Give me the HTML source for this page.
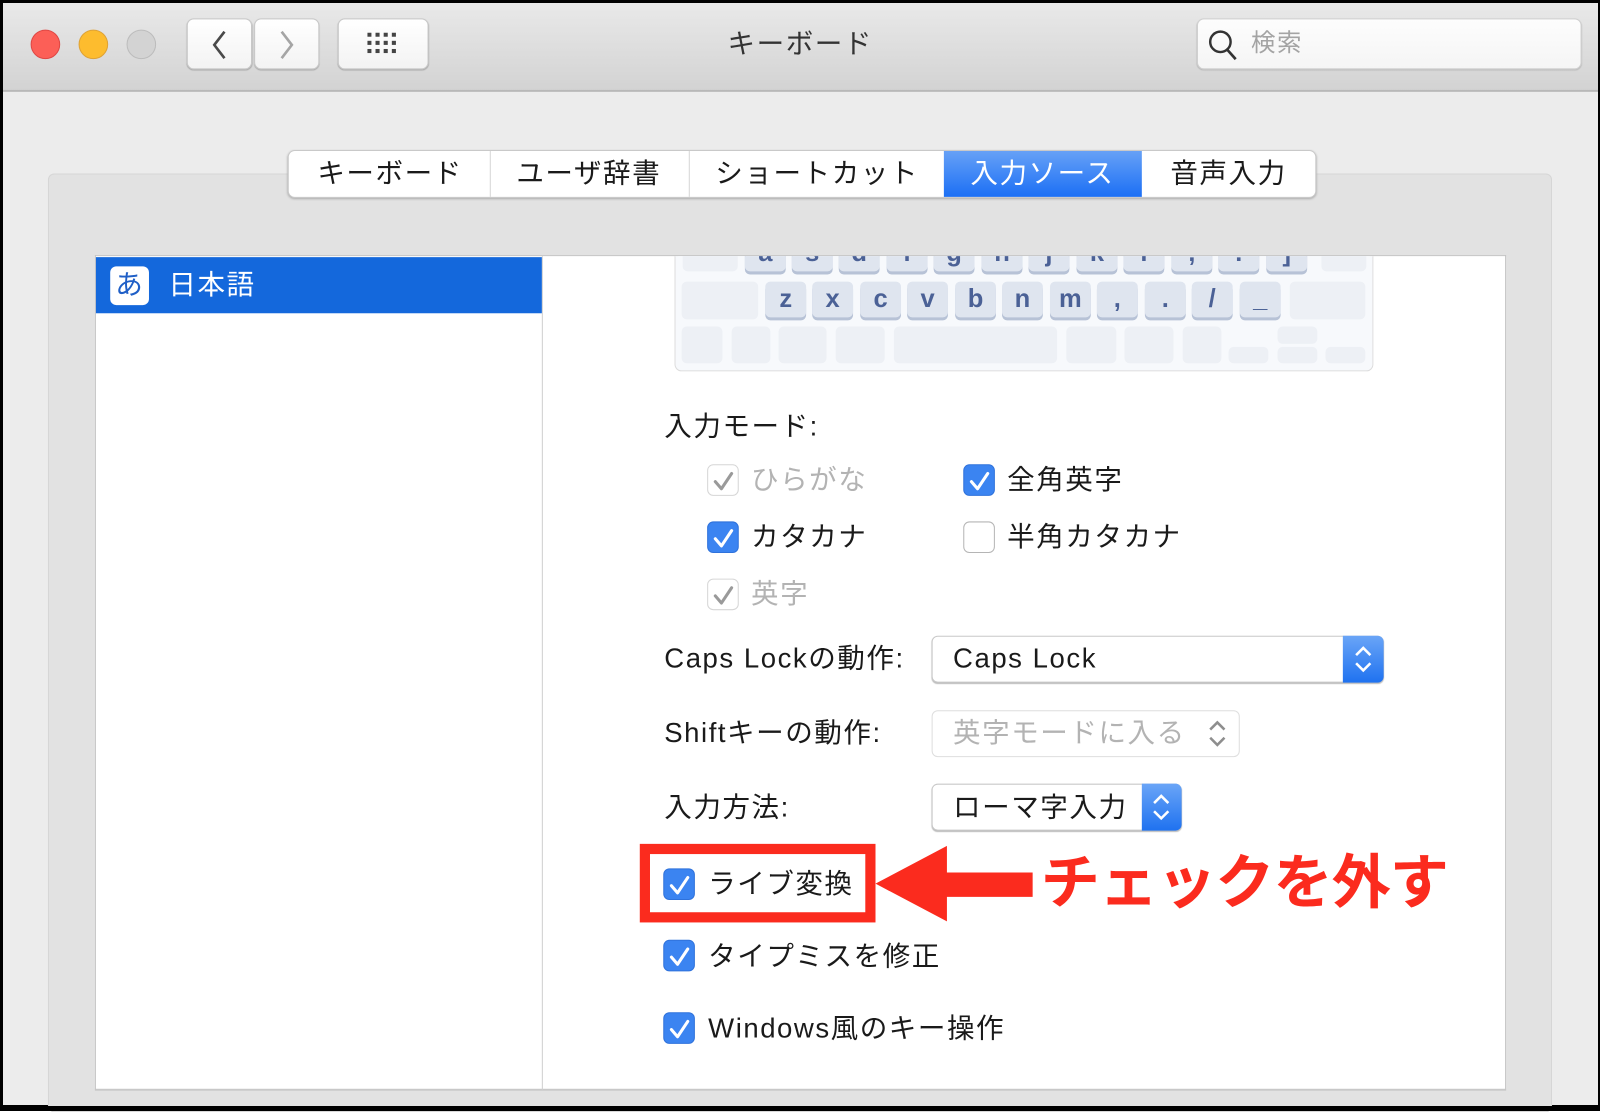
<!DOCTYPE html>
<html><head><meta charset="utf-8"><style>
*{margin:0;padding:0;box-sizing:border-box}
body{width:1600px;height:1111px;position:relative;overflow:hidden;background:#fff;font-family:"Liberation Sans","Noto Sans CJK JP",sans-serif;color:#1a1a1a}
.a{position:absolute}
.win{left:0;top:0;width:1600px;height:1109px;background:#ececec;border:3px solid #000;border-right-width:2px;border-bottom-width:4px}
#s{position:absolute;left:0;top:0;width:1568px;height:1088px;transform:scale(1.0204);transform-origin:0 0}
.tb{left:0;top:0;width:1566px;height:88px;background:linear-gradient(#e9e9e9,#d3d3d3);border-bottom:2px solid #b8b8b8}
.dot{width:29px;height:29px;border-radius:50%;top:29px}
.btn{background:linear-gradient(#fff,#f3f3f3);border:1px solid #c8c8c8;border-radius:7px;box-shadow:0 1px 1px #aaa}
.t{white-space:nowrap;font-size:27px;line-height:1;margin-top:1px;letter-spacing:1.5px}
.key{background:#dfe5ef;border-radius:5px;box-shadow:0 3px 0 #b7c2d6;color:#4b6196;font-weight:bold;font-size:25px;text-align:center;line-height:34px;width:40px;height:35px}
.bk{background:#edf0f5;border-radius:5px}
.cb{width:31px;height:31px;border-radius:6px;background:#3b84f1;border:1px solid #2f72db}
.cb svg{position:absolute;left:5px;top:6px}
.cbd{background:#fff;border:1.5px solid #d6d6d6}
.cbe{background:#fff;border:1.5px solid #b5b5b5}
.pop{background:#fff;border:1px solid #c9c9c9;border-radius:6px;box-shadow:0 1px 1px #bbb}
.step{background:linear-gradient(#6aa5f7,#1f72f0);border-radius:0 6px 6px 0}
</style></head><body>
<div class="a win"></div>
<div id="s">
<div class="a tb" style="left:2px;top:2px"></div>
<div class="a dot" style="left:30px;background:#fc5f57;border:1px solid #df4744"></div>
<div class="a dot" style="left:77px;background:#fdbc2e;border:1px solid #dea236"></div>
<div class="a dot" style="left:124px;background:#d3d3d3;border:1px solid #bcbcbc"></div>
<div class="a btn" style="left:183px;top:18px;width:64px;height:50px"></div>
<div class="a btn" style="left:249px;top:18px;width:64px;height:50px"></div>
<svg class="a" style="left:205px;top:28px" width="20" height="32"><path d="M15 3 L5 16 L15 29" stroke="#4a4a4a" stroke-width="2.6" fill="none"/></svg>
<svg class="a" style="left:271px;top:28px" width="20" height="32"><path d="M5 3 L15 16 L5 29" stroke="#a5a5a5" stroke-width="2.6" fill="none"/></svg>
<div class="a btn" style="left:331px;top:18px;width:89px;height:50px"></div>
<svg class="a" style="left:360px;top:32px" width="32" height="24" fill="#444"><g id="r"><rect x="0" y="0" width="4" height="4"/><rect x="8" y="0" width="4" height="4"/><rect x="16" y="0" width="4" height="4"/><rect x="24" y="0" width="4" height="4"/></g><use href="#r" y="8"/><use href="#r" y="16"/></svg>
<div class="a t" style="left:713px;top:29px;color:#333">キーボード</div>
<div class="a" style="left:1173px;top:18px;width:377px;height:50px;background:linear-gradient(#fdfdfd,#f5f5f5);border:1px solid #cfcfcf;border-radius:7px;box-shadow:0 1px 1px #bbb"></div>
<svg class="a" style="left:1183px;top:27px" width="32" height="34"><circle cx="13" cy="14" r="10" stroke="#333" stroke-width="2.4" fill="none"/><path d="M20 22 L28 31" stroke="#333" stroke-width="2.6"/></svg>
<div class="a t" style="left:1226px;top:30px;color:#a4a4a4;font-size:24px">検索</div>

<div class="a" style="left:47px;top:170px;width:1474px;height:920px;background:#e2e2e2;border:1px solid #d6d6d6;border-radius:6px"></div>
<div class="a" style="left:282px;top:147px;width:1008px;height:47px;background:#fff;border:1px solid #c9c9c9;border-radius:7px;box-shadow:0 1px 2px #aaa;overflow:hidden">
 <div class="a" style="left:197px;top:0;width:1px;height:47px;background:#d6d6d6"></div>
 <div class="a" style="left:392px;top:0;width:1px;height:47px;background:#d6d6d6"></div>
 <div class="a" style="left:642px;top:-1px;width:194px;height:47px;background:linear-gradient(#68a2f6,#1a6ef5)"></div>
</div>
<div class="a t" style="left:311px;top:156px">キーボード</div>
<div class="a t" style="left:506px;top:156px">ユーザ辞書</div>
<div class="a t" style="left:701px;top:156px">ショートカット</div>
<div class="a t" style="left:951px;top:156px;color:#fff">入力ソース</div>
<div class="a t" style="left:1147px;top:156px">音声入力</div>

<div class="a" style="left:93px;top:250px;width:1383px;height:819px;background:#fff;border:1px solid #c4c4c4;border-bottom:2px solid #c8c8c8"></div>
<div class="a" style="left:531px;top:251px;width:1px;height:817px;background:#cfcfcf"></div>
<div class="a" style="left:94px;top:252px;width:437px;height:55px;background:#1468dc"></div>
<div class="a" style="left:108px;top:261px;width:38px;height:38px;background:#fff;border-radius:6px"></div>
<div class="a t" style="left:113px;top:265px;color:#1f5fc7;font-size:27px;letter-spacing:0">あ</div>
<div class="a t" style="left:165px;top:265px;color:#fff;font-size:27px">日本語</div>

<div class="a" style="left:661px;top:251px;width:685px;height:113px;background:#f7f9fc;border:1px solid #dcdcdc;border-top:none;border-radius:0 0 7px 7px;overflow:hidden">
 <div class="a bk" style="left:7px;top:-10px;width:54px;height:25px"></div>
 <div class="a bk" style="left:633px;top:-10px;width:44px;height:25px"></div>
</div>
<div class="a" style="left:661px;top:251px;width:685px;height:20px;overflow:hidden">
 <div class="a key" style="left:69px;top:-20px">a</div><div class="a key" style="left:115px;top:-20px">s</div><div class="a key" style="left:161px;top:-20px">d</div><div class="a key" style="left:208px;top:-20px">f</div><div class="a key" style="left:254px;top:-20px">g</div><div class="a key" style="left:301px;top:-20px">h</div><div class="a key" style="left:347px;top:-20px">j</div><div class="a key" style="left:394px;top:-20px">k</div><div class="a key" style="left:440px;top:-20px">l</div><div class="a key" style="left:487px;top:-20px">;</div><div class="a key" style="left:533px;top:-20px">:</div><div class="a key" style="left:580px;top:-20px">]</div>
</div>
<div class="a bk" style="left:668px;top:276px;width:75px;height:37px"></div>
<div class="a key" style="left:750px;top:276px">z</div><div class="a key" style="left:796px;top:276px">x</div><div class="a key" style="left:843px;top:276px">c</div><div class="a key" style="left:889px;top:276px">v</div><div class="a key" style="left:936px;top:276px">b</div><div class="a key" style="left:982px;top:276px">n</div><div class="a key" style="left:1029px;top:276px">m</div><div class="a key" style="left:1075px;top:276px">,</div><div class="a key" style="left:1122px;top:276px">.</div><div class="a key" style="left:1168px;top:276px">/</div><div class="a key" style="left:1215px;top:276px">_</div>
<div class="a bk" style="left:1264px;top:276px;width:74px;height:37px"></div>
<div class="a bk" style="left:668px;top:320px;width:40px;height:36px"></div>
<div class="a bk" style="left:717px;top:320px;width:38px;height:36px"></div>
<div class="a bk" style="left:763px;top:320px;width:47px;height:36px"></div>
<div class="a bk" style="left:819px;top:320px;width:48px;height:36px"></div>
<div class="a bk" style="left:876px;top:320px;width:160px;height:36px"></div>
<div class="a bk" style="left:1045px;top:320px;width:49px;height:36px"></div>
<div class="a bk" style="left:1102px;top:320px;width:48px;height:36px"></div>
<div class="a bk" style="left:1159px;top:320px;width:38px;height:36px"></div>
<div class="a bk" style="left:1204px;top:340px;width:39px;height:16px"></div>
<div class="a bk" style="left:1252px;top:320px;width:39px;height:17px"></div>
<div class="a bk" style="left:1252px;top:340px;width:39px;height:16px"></div>
<div class="a bk" style="left:1299px;top:340px;width:39px;height:16px"></div>

<div class="a t" style="left:651px;top:404px">入力モード:</div>
<svg width="0" height="0" style="position:absolute"><defs><path id="ck" d="M2 10 L8 17 L18 2" stroke-width="3" fill="none" stroke-linecap="round" stroke-linejoin="round"/></defs></svg>
<div class="a cb cbd" style="left:693px;top:455px"><svg width="22" height="20"><use href="#ck" stroke="#9a9a9a"/></svg></div>
<div class="a t" style="left:736px;top:456px;color:#b3b3b3">ひらがな</div>
<div class="a cb" style="left:944px;top:455px"><svg width="22" height="20"><use href="#ck" stroke="#fff"/></svg></div>
<div class="a t" style="left:987px;top:456px">全角英字</div>
<div class="a cb" style="left:693px;top:511px"><svg width="22" height="20"><use href="#ck" stroke="#fff"/></svg></div>
<div class="a t" style="left:736px;top:512px">カタカナ</div>
<div class="a cb cbe" style="left:944px;top:511px"></div>
<div class="a t" style="left:987px;top:512px">半角カタカナ</div>
<div class="a cb cbd" style="left:693px;top:567px"><svg width="22" height="20"><use href="#ck" stroke="#9a9a9a"/></svg></div>
<div class="a t" style="left:736px;top:568px;color:#b3b3b3">英字</div>

<div class="a t" style="left:651px;top:631px">Caps Lockの動作:</div>
<div class="a pop" style="left:913px;top:623px;width:443px;height:46px"></div>
<div class="a step" style="left:1316px;top:623px;width:40px;height:46px"></div>
<svg class="a" style="left:1324px;top:630px" width="24" height="32"><path d="M5 12 L12 5 L19 12 M5 20 L12 27 L19 20" stroke="#fff" stroke-width="2.5" fill="none"/></svg>
<div class="a t" style="left:934px;top:631px">Caps Lock</div>

<div class="a t" style="left:651px;top:704px">Shiftキーの動作:</div>
<div class="a" style="left:913px;top:696px;width:302px;height:46px;border:1px solid #dedede;border-radius:6px;background:#fff"></div>
<div class="a t" style="left:934px;top:704px;color:#b3b3b3">英字モードに入る</div>
<svg class="a" style="left:1181px;top:703px" width="24" height="32"><path d="M5 12 L12 5 L19 12 M5 20 L12 27 L19 20" stroke="#8e8e8e" stroke-width="2.5" fill="none"/></svg>

<div class="a t" style="left:651px;top:777px">入力方法:</div>
<div class="a pop" style="left:913px;top:768px;width:245px;height:46px"></div>
<div class="a step" style="left:1119px;top:768px;width:39px;height:46px"></div>
<svg class="a" style="left:1126px;top:775px" width="24" height="32"><path d="M5 12 L12 5 L19 12 M5 20 L12 27 L19 20" stroke="#fff" stroke-width="2.5" fill="none"/></svg>
<div class="a t" style="left:934px;top:777px">ローマ字入力</div>

<div class="a cb" style="left:650px;top:851px"><svg width="22" height="20"><use href="#ck" stroke="#fff"/></svg></div>
<div class="a t" style="left:694px;top:852px">ライブ変換</div>
<div class="a" style="left:627px;top:827px;width:231px;height:77px;border:10px solid #fb2b1e"></div>
<svg class="a" style="left:855px;top:826px" width="160" height="80"><path d="M3 40 L73 3 L73 29 L157 29 L157 53 L73 53 L73 77 Z" fill="#fb2b1e"/></svg>
<div class="a t" style="left:1020px;top:836px;color:#fb2b1e;font-size:58px;font-weight:bold;letter-spacing:-1px">チェックを外す</div>

<div class="a cb" style="left:650px;top:921px"><svg width="22" height="20"><use href="#ck" stroke="#fff"/></svg></div>
<div class="a t" style="left:694px;top:923px">タイプミスを修正</div>
<div class="a cb" style="left:650px;top:992px"><svg width="22" height="20"><use href="#ck" stroke="#fff"/></svg></div>
<div class="a t" style="left:694px;top:994px">Windows風のキー操作</div>
</div>
<div class="a" style="left:0;top:0;width:1600px;height:3px;background:#000"></div>
<div class="a" style="left:0;top:0;width:3px;height:1111px;background:#000"></div>
<div class="a" style="left:1598px;top:0;width:2px;height:1111px;background:#000"></div>
<div class="a" style="left:0;top:1106px;width:1600px;height:5px;background:#000"></div>
</body></html>
